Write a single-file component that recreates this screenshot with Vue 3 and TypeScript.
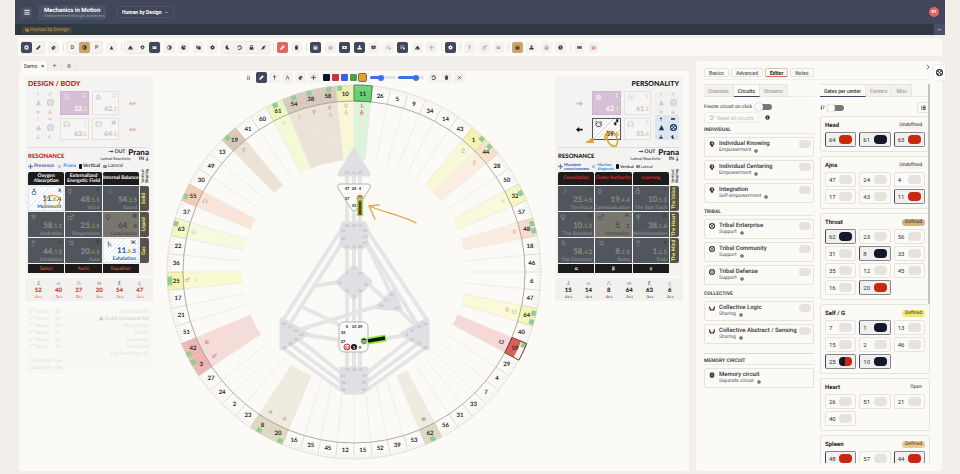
<script setup lang="ts">
import { ref } from 'vue'

/* ---------- icons, drawn on a 16 unit square ---------- */
const icons: Record<string, string> = {
  disc: 'M8 1a7 7 0 1 0 0 14A7 7 0 0 0 8 1Zm0 4a3 3 0 1 1 0 6 3 3 0 0 1 0-6Z',
  pen: 'M1 15l1-5 9-9 4 4-9 9Z',
  eraser: 'M1 9l7-7 6 3v5l-5 5H5Zm6 0l4 3 2-3-4-2Z',
  half: 'M8 1a7 7 0 1 0 0 14A7 7 0 0 0 8 1Zm0 2v10A5 5 0 0 1 8 3Z',
  tri: 'M8 2l6 12H2Z',
  nodes: 'M6 2h4v4h2l3 4v4H1v-4l3-4h2Zm-2 8v2h2v-2Zm6 0v2h2v-2Z',
  shield: 'M8 1l6 3v5l-6 6-6-6V4Zm0 4L5 8l3 3 3-3Z',
  card: 'M2 3h12v10H2Zm2 2v2h8V5Z',
  pie: 'M8 1a7 7 0 1 0 7 7H8Z M10 1v5h5a6 6 0 0 0-5-5Z',
  stack: 'M1 2h9v3h5v9H6v-3H1Zm3 3v3h4V5Z',
  gear: 'M6 1h4v2l3 0 2 5-2 5H10v2H6v-2H3L1 8l2-5h3Zm2 5a2 2 0 1 0 0 4 2 2 0 0 0 0-4Z',
  moon: 'M10 1a7 7 0 1 0 4 11A7 7 0 0 1 10 1Z',
  undo: 'M2 2v5h5L5 5a4.500 4.500 0 1 1-1 6l-2 1a7 7 0 1 0 2-9Z',
  lock: 'M3 7V5a5 5 0 0 1 10 0v2h1v8H2V7Zm2 0h6V5a3 3 0 0 0-6 0Z',
  plug: 'M1 13l4-4-1-3 3-3 2 2 4-4 2 2-4 4 1 3-3 3-2-1-4 4Z',
  trash: 'M2 2h4V1h4v1h4v2H2Zm1 3h10l-1 10H4Z',
  grid: 'M2 2h12v12H2Zm2 2v2h8V4Zm0 4v1h8V8Zm0 3v1h8v-1Z',
  box: 'M1 3h14v10H1Zm5 2v6l5-3Z',
  people: 'M8 1a3 3 0 1 1 0 6 3 3 0 0 1 0-6ZM1 14v-4l4-2h6l4 2v4Z',
  chat: 'M1 2h14v10H9l-3 3v-3H1Zm4 4v2h6V6Z',
  lines: 'M1 2h12v2H1Zm0 4h8v2H1Zm0 4h6v2H1Zm9-2h5v6h-5Z',
  move: 'M8 0l3 4H9v3h3V5l4 3-4 3V9H9v3h2l-3 4-3-4h2V9H4v2L0 8l4-3v2h3V4H5Z',
  pin: 'M5 1h6v2l-1 1v4l2 2H9v5H7v-5H4l2-2V4L5 3Z',
  link: 'M2 4h6v2H4v6h6v-3h2v5H2Zm7-3h6v6l-2-2-5 5-2-2 5-5Z',
  up: 'M8 1l5 5-1.500 1.500L9 5v10H7V5L4.500 7.500 3 6Z',
  letter: 'M7 2h2l5 12h-2L8 5l-4 9H2Z',
  drag: 'M4 2h3v3H4Zm5 0h3v3H9ZM4 7h3v3H4Zm5 0h3v3H9Zm-5 5h3v3H4Zm5 0h3v3H9Z',
  close: 'M3 2l5 5 5-5 1 1-5 5 5 5-1 1-5-5-5 5-1-1 5-5-5-5Z',
  menu: 'M1 2h14v3H1Zm0 5h14v3H1Zm0 5h14v3H1Z',
  goggles: 'M1 4h14v8H10L8 10l-2 2H1Zm3 3v2h2V7Zm6 0v2h2V7Z',
  info: 'M8 1a7 7 0 1 0 0 14A7 7 0 0 0 8 1ZM7 4h2v2H7Zm0 3h2v5H7Z',
  head: 'M4 1h7l3 4v4l-3 2v4H6l-1-3-3-2V4Zm3 3v5h3V4Z',
  wheel: 'M8 0a8 8 0 1 0 0 16A8 8 0 0 0 8 0Zm0 2 3 2-3 3-3-3ZM2 8l2-3 3 3-3 3Zm12 0-2 3-3-3 3-3Zm-6 6-3-2 3-3 3 3Z',
  hands: 'M0 3l3 1 1 5 3 2v4H4L1 11Zm16 0-3 1-1 5-3 2v4h3l3-4Z',
  memory: 'M5 1h6l3 3v8l-3 3H5l-3-3V4Zm2 3v2h2V4Zm0 3v5h2V7Z',
  sort: 'M3 1h2v10h2l-3 4-3-4h2Zm6 1h6v2H9Zm0 4h5v2H9Zm0 4h3v2H9Z',
  list: 'M1 2h3v3H1Zm5 0h9v3H6ZM1 7h3v3H1Zm5 0h9v3H6Zm-5 5h3v3H1Zm5 0h9v3H6Z',
  arrowR: 'M1 6h8V2l7 6-7 6v-4H1Z',
  arrowL: 'M15 6H7V2L0 8l7 6v-4h8Z',
  swap: 'M0 8l5-5v3h6V3l5 5-5 5v-3H5v3Z',
}

type Tool = { icon: string; tone?: string; label: string; text?: string }
type ToolGroup = { joined?: boolean; sep?: boolean; tools: Tool[] }
const t = (icon: string, tone = '', text = ''): Tool => ({ icon, tone, text, label: text || icon })
const groups: ToolGroup[] = [
  { joined: true, tools: [t('disc', 'dark'), t('pen')] },
  { tools: [t('eraser')] },
  { sep: true, joined: true, tools: [t('', '', 'D'), t('half', 'gold'), t('', '', 'P')] },
  { tools: [t('tri')] },
  { sep: true, joined: true, tools: [t('nodes'), t('shield'), t('card', 'dark')] },
  { tools: [t('half'), t('pie'), t('stack'), t('gear')] },
  { joined: true, tools: [t('moon'), t('undo'), t('lock'), t('plug')] },
  { sep: true, tools: [t('pen', 'red'), t('trash')] },
  { sep: true, tools: [t('grid', 'dark'), t('grid', 'faint'), t('box', 'dark'), t('people', 'dark'), t('chat'), t('lines', 'faint'), t('lines', 'dark'), t('nodes'), t('move', 'faint')] },
  { sep: true, tools: [t('gear', 'dark')] },
  { sep: true, tools: [t('pin', 'faint'), t('link', 'faint'), t('card', 'faint')] },
  { sep: true, tools: [t('grid', 'gold'), t('people'), t('lock', 'faint'), t('info')] },
  { sep: true, tools: [t('goggles'), t('grid', 'rose')] },
]
const groupWidth = (g: ToolGroup) => Math.floor(11 + (g.joined ? 12 : 14.6) * (g.tools.length - 1)) + 'px'

const drawTools = [t('drag', 'bare'), t('pen', 'dark'), t('up'), t('letter'), t('eraser'), t('move')]
const swatches = ['#0c1721', '#cf2f49', '#3b61e2', '#48a04a', '#e0a12e']
const activeSwatch = ref(4)
const strokeSize = ref(38)
const opacity = ref(76)

/* ---------- side charts ---------- */
type Cell = { sym: string; mark: string; num: string; line: string; tail: string; name: string; tone: string }
const c = (sym: string, mark: string, n: string, name: string, tone = 'dim'): Cell => {
  const [num, line, tail] = n.split('.')
  return { sym, mark, num, line, tail, name, tone }
}
type Bubble = { sym: string; mark: string; n: string; s: string; tone: string }
interface Chart {
  side: string; title: string; heads: string[]; feet: string[]; strips: string[]
  legend: string[]; rows: Cell[][]; bubbles: Bubble[]; stats: [string, string, string][]
}
const charts: Record<'left' | 'right', Chart> = {
  left: {
    side: 'design', title: 'DESIGN / BODY',
    heads: ['Oxygen Absorption', 'Externalized Energetic Field', 'Internal Balance'],
    feet: ['Satori', 'Auric', 'Equalizer'],
    strips: ['Solid', 'Liquid', 'Gas'],
    legend: ['Presence', 'Prana'],
    rows: [
      [c('♁', 'Ӿ', '11.6.4', 'Movement', 'bright'), c('☿', '▪', '48.5.5', 'Voice'), c('☽', '✦', '54.3.5', 'Sound')],
      [c('♆', '', '58.5.1', 'Hydration'), c('♂', '7', '25.3.5', 'Temperature'), c('♀', '▩', '64.6.4', 'Consistence', 'pale')],
      [c('♇', '▲', '44.5.5', 'Inhalation'), c('♃', '▩', '20.4.5', 'Aura'), c('♄', 'Ж', '11.6.5', 'Exhalation', 'bright')],
    ],
    bubbles: [
      { sym: '☉', mark: '1', n: '32', s: '.5', tone: 'violet' }, { sym: '⊕', mark: 'Չ', n: '42', s: '.2', tone: '' },
      { sym: '☊', mark: 'ʅ', n: '63', s: '.5', tone: '' }, { sym: '☋', mark: '▩', n: '64', s: '.5', tone: '' },
    ],
    stats: [['ჰ', '52', '.4'], ['⩀', '40', '.3'], ['⩃', '37', '.3'], ['ო', '20', '.5'], ['ξ', '54', '.5'], ['ς', '47', '.1']],
  },
  right: {
    side: 'personality', title: 'PERSONALITY',
    heads: ['Foundation', 'Outer Authority', 'Learning'],
    feet: ['α', 'β', 'γ'],
    strips: ['The Voice', 'The Heart', 'The Mind'],
    legend: ['Mundane consciousness', 'Martian diagonals'],
    rows: [
      [c('☽', 'Ξ', '25.4.5', 'The Force'), c('☿', '', '19.4.4', 'Communication'), c('♁', '✦', '10.5.3', 'The Side Track')],
      [c('♀', '▩', '10.5.5', 'The Standard'), c('♂', 'Ж', '5.1.1', 'Motivation', 'pale'), c('♆', '▩', '38.1.6', 'Misinformation')],
      [c('♄', '7', '58.4.2', 'The Conveyor'), c('♃', '', '8.2.5', 'Rules'), c('♇', '▲', '1.2.5', 'Trick')],
    ],
    bubbles: [
      { sym: '⊕', mark: '1', n: '62', s: '.5', tone: 'violet' }, { sym: '☉', mark: 'ʅ', n: '61', s: '.1', tone: '' },
      { sym: '☋', mark: '▞', n: '59', s: '.6', tone: 'hatch' }, { sym: '☊', mark: 'ʃ', n: '55', s: '.6', tone: '' },
    ],
    stats: [['ჰ', '15', '.4'], ['⩀', '14', '.4'], ['⩃', '8', '.4'], ['ო', '64', '.5'], ['ξ', '63', '.5'], ['ς', '6', '.5']],
  },
}
const notes = [
  ['2ⁿᵈ Reso..', 'Or', 'Environment'], ['3ʳᵈ Reso..', 'Or', '▣ (Cold) Advanced 4th'], ['4ᵗʰ Reso..', 'Ox', 'Perspective'],
  ['5ᵗʰ Reso..', 'Fo', 'Power'], ['6ᵗʰ Reso..', 'Oi', 'Generator'], ['7ᵗʰ Reso..', 'To', 'Emotional'],
  ['', '', 'Trip. Definition 1x'], ['Connection', 'Lux', ''], ['Outbreath', 'Oxi', ''],
]

/* ---------- wheel ---------- */
const CX = 354, CY = 272, STEP = 360 / 64
const order = [11, 26, 5, 9, 34, 14, 43, 1, 44, 28, 50, 32, 57, 48, 18, 46, 6, 47, 64, 40, 59, 29, 4, 7, 33, 31, 56, 62, 53, 39, 52, 15,
  12, 45, 35, 16, 20, 8, 23, 2, 24, 27, 3, 42, 51, 21, 17, 25, 36, 22, 63, 37, 55, 30, 49, 13, 19, 41, 60, 61, 54, 38, 58, 10]
const at = (deg: number, r: number) => {
  const a = (deg * Math.PI) / 180
  return { x: +(CX + r * Math.sin(a)).toFixed(2), y: +(CY - r * Math.cos(a)).toFixed(2) }
}
const wedge = (a: number, b: number, r0: number, r1: number) => {
  const p = at(a, r1), q = at(b, r1), s = at(b, r0), u = at(a, r0)
  return `M${p.x} ${p.y}A${r1} ${r1} 0 0 1 ${q.x} ${q.y}L${s.x} ${s.y}A${r0} ${r0} 0 0 0 ${u.x} ${u.y}Z`
}
const tints: Record<number, string[]> = {
  11: ['#67cf72', '#dff3dc'], 10: ['#f0f0b4', '#f8f8d8'], 58: ['#d9c9ba', '#ece3d8'], 38: ['#d9c9ba', '#ece3d8'], 54: ['#d9c9ba', '#ece3d8'],
  61: ['#edf8bd', '#f5fad6'], 19: ['#d8c8b6', '#ebe3d8'], 55: ['#f3cdb2', '#f9e5d9'], 63: ['#f3f8c4', '#f8fae0'], 25: ['#f4f6ae', '#f9f9d2'],
  42: ['#eeb4b0', '#f6dcd8'], 3: ['#eeb4b0', '#f6dcd8'], 20: ['#dedac2', '#efebde'], 8: ['#dedac2', '#efebde'], 62: ['#dedac2', '#efebde'],
  59: ['#dd5f58', '#f6d9d6'], 64: ['#f5f7b4', '#fafad8'], 48: ['#f8dccb', '#fbece2'], 32: ['#f4f8c0', '#f9fadb'],
  1: ['#f4f4ae', '#f8f8d8'], 44: ['#f5e2c8', '#fbeee0'],
}
const greens: Record<number, number[]> = { 10: [0.2], 58: [0.6], 38: [0.5], 54: [0.6], 61: [0.5], 19: [0.3], 55: [0.3], 63: [0.7], 25: [0.4, 0.6], 42: [0.3], 3: [0.8], 20: [0.2], 8: [0.5], 62: [0.5], 59: [0.15], 64: [0.3, 0.8], 48: [0.3, 0.7], 32: [0.5], 1: [0.8], 44: [0.4], 11: [] }
const gates = order.map((n, i) => {
  const a = i * STEP, b = a + STEP
  return {
    n, label: at(a + STEP / 2, 178), tint: tints[n],
    outer: wedge(a, b, 171, n === 59 ? 181 : 187), inner: wedge(a, b, 112, 171),
    p0: at(a, 112), p1: at(a, 171), p2: at(a, 187),
    ticks: [1, 2, 3, 4, 5].map(k => ({ p: at(a + (k * STEP) / 6, 182), q: at(a + (k * STEP) / 6, 187) })),
    greens: (greens[n] || []).map(f => wedge(a + STEP * f - 0.8, a + STEP * f + 0.8, 182, 187)),
  }
})
const sq59 = wedge(20 * STEP, 21 * STEP, 171, 187)
const sq11 = wedge(0, STEP, 171, 187)
const planets = [
  { g: 11, s: '♄', r: 166, k: '#d8402c' }, { g: 11, s: '♁', r: 159, k: '#d8402c' }, { g: 10, s: '♀', r: 166, k: '#b9b7a4' }, { g: 10, s: '♁', r: 159, k: '#b9b7a4' },
  { g: 58, s: '♆', r: 166, k: '#df8a7e' }, { g: 58, s: '♄', r: 159, k: '#a7a09a' }, { g: 38, s: '♆', r: 165, k: '#a7a09a' }, { g: 54, s: '☽', r: 165, k: '#e08478' },
  { g: 61, s: '☉', r: 165, k: '#aeb39a' }, { g: 19, s: '☿', r: 164, k: '#aaa29a' }, { g: 55, s: '☊', r: 165, k: '#c99c90' }, { g: 63, s: '☊', r: 165, k: '#c9c29c' },
  { g: 25, s: '♂', r: 167, k: '#d59a86' }, { g: 25, s: '☽', r: 159, k: '#b9b58e' }, { g: 42, s: '⊕', r: 163, k: '#d87a72' }, { g: 3, s: '♂', r: 163, k: '#a88482' },
  { g: 20, s: '♃', r: 163, k: '#e08a7c' }, { g: 8, s: '♃', r: 163, k: '#9c9a8e' }, { g: 62, s: '⊕', r: 163, k: '#8f8d80' }, { g: 59, s: '☋', r: 163, k: '#14181c' },
  { g: 64, s: '☋', r: 165, k: '#c4c094' }, { g: 64, s: '♀', r: 158, k: '#e0a090' }, { g: 48, s: '☿', r: 165, k: '#df9080' }, { g: 32, s: '☉', r: 165, k: '#c9a294' },
  { g: 1, s: '♇', r: 163, k: '#a8a684' }, { g: 44, s: '♇', r: 163, k: '#e0937f' },
].map(p => ({ ...p, ...at((order.indexOf(p.g) + 0.5) * STEP, p.r) }))

const channels = [
  'M347 170V390', 'M354 170V390', 'M360 170V390',
  'M341 230L283 320', 'M345 238L291 322', 'M367 230L427 320', 'M364 238L417 324', 'M366 242L390 292',
  'M339 282L314 286', 'M302 307L342 326', 'M368 284L384 298', 'M381 305L298 330', 'M397 308L414 324',
  'M300 334L340 340', 'M368 341L408 335',
  'M283 348L341 390', 'M289 343L341 382', 'M297 338L342 374', 'M425 348L367 390', 'M419 343L367 382', 'M411 338L366 374',
]
type GateText = [string, number, number]
const mutedGates: GateText[] = [
  ['64', 347, 174], ['61', 354, 174], ['63', 360, 174], ['62', 347, 227], ['23', 354, 227], ['56', 360, 227],
  ['16', 343, 232], ['20', 343, 240], ['35', 365, 232], ['12', 365, 238], ['45', 365, 244], ['31', 347, 248], ['8', 354, 248], ['33', 360, 248],
  ['1', 354, 270], ['7', 347, 275], ['13', 360, 275], ['10', 339, 284], ['25', 366, 286], ['15', 347, 292], ['46', 360, 292], ['2', 354, 298],
  ['21', 392, 296], ['51', 386, 301], ['26', 381, 307], ['40', 397, 309],
  ['48', 284, 325], ['57', 290, 328], ['44', 296, 332], ['50', 301, 336], ['32', 296, 341], ['28', 290, 345], ['18', 284, 349],
  ['36', 425, 325], ['22', 419, 328], ['37', 412, 332], ['6', 407, 336], ['49', 412, 341], ['55', 419, 345], ['30', 425, 349],
  ['53', 347, 371], ['60', 354, 371], ['52', 360, 371], ['54', 343, 377], ['38', 343, 384], ['58', 343, 391], ['19', 364, 377], ['39', 364, 384], ['41', 364, 391],
]
const openGates: GateText[] = [
  ['47', 347, 190], ['24', 354, 190], ['4', 360, 190], ['17', 347, 200], ['43', 354, 207],
  ['5', 347, 328], ['14', 354, 328], ['29', 360, 328], ['34', 343, 334], ['27', 343, 343], ['9', 360, 349],
]

/* ---------- editor ---------- */
const pages = ['Basics', 'Advanced', 'Editor', 'Notes']
const page = ref('Editor')
const circuitTabs = ['Channels', 'Circuits', 'Streams']
const circuitTab = ref('Circuits')
const gateTabs = ['Gates per center', 'Centers', 'Misc']
const gateTab = ref('Gates per center')
const sections = [
  { title: 'Individual', icon: 'head', sub: true, items: [['Individual Knowing', 'Empowerment'], ['Individual Centering', 'Empowerment'], ['Integration', 'Self-empowerment']] },
  { title: 'Tribal', icon: 'wheel', sub: true, items: [['Tribal Enterprise', 'Support'], ['Tribal Community', 'Support'], ['Tribal Defense', 'Support']] },
  { title: 'Collective', icon: 'hands', sub: true, items: [['Collective Logic', 'Sharing'], ['Collective Abstract / Sensing', 'Sharing']] },
  { title: 'Memory circuit', icon: 'memory', sub: false, items: [['Memory circuit', 'Separate circuit']] },
]
const centers = [
  { name: 'Head', state: 'Undefined', tone: 'soft', gates: [[64, 'r'], [61, 'k'], [63, 'r']] },
  { name: 'Ajna', state: 'Undefined', tone: 'soft', gates: [[47, ''], [24, ''], [4, ''], [17, ''], [43, ''], [11, 'r']] },
  { name: 'Throat', state: 'Defined', tone: 'tan', gates: [[62, 'k'], [23, ''], [56, ''], [31, ''], [8, 'k'], [33, ''], [35, ''], [12, ''], [45, ''], [16, ''], [20, 'r']] },
  { name: 'Self / G', state: 'Defined', tone: 'lemon', gates: [[7, ''], [1, 'k'], [13, ''], [15, ''], [2, ''], [46, ''], [25, 'kr'], [10, 'k']] },
  { name: 'Heart', state: 'Open', tone: '', gates: [[26, ''], [51, ''], [21, ''], [40, '']] },
  { name: 'Spleen', state: 'Defined', tone: 'peach', gates: [[48, 'r'], [57, ''], [44, 'r']] },
]
</script>

<template>
  <div class="app">
    <header class="top">
      <div class="bar">
        <button class="burger" aria-label="Menu"><svg viewBox="0 0 16 16"><path :d="icons.menu" /></svg></button>
        <div class="brand">
          <strong>Mechanics in Motion</strong>
          <span>Empowerment through awareness</span>
        </div>
        <div class="picker">
          <select aria-label="System"><option>Human by Design</option></select>
          <svg viewBox="0 0 16 16"><path d="M3 5l5 5 5-5" /></svg>
        </div>
        <button class="avatar">RT</button>
      </div>
      <div class="crumbs">
        <a href="#" class="crumb"><svg viewBox="0 0 16 16"><path :d="icons.stack" /></svg>Human by Design</a>
        <button class="fold" aria-label="Collapse"><svg viewBox="0 0 16 16"><path d="M3 11l5-5 5 5" /></svg></button>
      </div>
    </header>

    <nav class="tools">
      <template v-for="(g, i) in groups" :key="i">
        <i v-if="g.sep" class="sep"></i>
        <div class="group" :class="{ joined: g.joined }" :style="{ width: groupWidth(g) }">
          <button v-for="(b, k) in g.tools" :key="k" class="tool" :class="b.tone" :aria-label="b.label">
            <template v-if="b.text">{{ b.text }}</template>
            <svg v-else viewBox="0 0 16 16"><path fill-rule="evenodd" :d="icons[b.icon]" /></svg>
          </button>
        </div>
      </template>
    </nav>

    <main class="work">
      <section class="left">
        <div class="doc-tabs">
          <button class="doc on">Demo <b>×</b></button>
          <button class="doc plus">+</button>
          <button class="doc" aria-label="Layout"><svg viewBox="0 0 16 16"><path fill-rule="evenodd" :d="icons.grid" /></svg></button>
        </div>
        <div class="stage">
          <aside v-for="(ch, key) in charts" :key="key" class="chart" :class="ch.side">
            <div class="sheet">
              <h2>{{ ch.title }}</h2>
              <div class="hero">
                <div class="glyphs">
                  <svg v-for="(ic, k) in ['pin', 'pen', 'tri', 'wheel', 'gear', 'lock', 'up', 'goggles', 'tri', 'wheel', 'people', 'moon']" :key="k" viewBox="0 0 16 16" :class="{ big: k % 6 === 2 || k % 6 === 3, warm: k === 4 || k === 5 || k === 7 }">
                    <path fill-rule="evenodd" :d="icons[ic]" />
                  </svg>
                </div>
                <div class="bubbles">
                  <div v-for="(b, k) in ch.bubbles" :key="k" class="bubble" :class="b.tone">
                    <span class="sym">{{ b.sym }}</span><span class="mark">{{ b.mark }}</span>
                    <span class="val">{{ b.n }}<em>{{ b.s }}</em></span>
                  </div>
                </div>
                <div class="arrows">
                  <svg v-for="k in 2" :key="k" viewBox="0 0 16 16" :class="{ strong: key === 'right' && k === 2 }">
                    <path :d="key === 'left' ? icons.swap : k === 1 ? icons.arrowR : icons.arrowL" />
                  </svg>
                </div>
                <svg v-if="key === 'right'" class="scribble" viewBox="0 0 36 22">
                  <path d="M0 15c5 1 9-3 6-3-5 2-4 4 2 3M22 6c-3 7 2 14 8 13 3-4 1-12-4-14-7 0-9 5-5 8" />
                </svg>
              </div>
              <div class="res">
                <h3>RESONANCE</h3>
                <div class="prana">
                  <p><span>→ OUT</span> <b>Prana</b></p>
                  <p class="small"><i>Lateral Reactivity</i><span>IN ↓</span></p>
                </div>
              </div>
              <div class="legend">
                <span v-for="(l, k) in ch.legend" :key="l" class="blue" :class="{ light: k === 1 }">
                  <svg viewBox="0 0 16 16"><path :d="k ? icons.close : icons.move" /></svg><u>{{ l }}</u>
                </span>
                <span><s class="tall"></s><b>Vertical</b></span>
                <span><s></s>Lateral</span>
              </div>
              <table>
                <thead>
                  <tr>
                    <th v-for="h in ch.heads" :key="h"><div>{{ h }}</div></th>
                    <th class="vhead"><span>Vertical<br />Shaping</span></th>
                  </tr>
                </thead>
                <tbody>
                  <tr v-for="(row, r) in ch.rows" :key="r">
                    <td v-for="(x, k) in row" :key="k" :class="x.tone">
                      <div class="cell">
                        <span class="sym">{{ x.sym }}</span><span class="mark">{{ x.mark }}</span>
                        <span class="val">{{ x.num }}<small>.<em>{{ x.line }}</em>.{{ x.tail }}</small></span>
                        <span class="name">{{ x.name }}</span>
                        <svg v-if="key === 'left' && r === 0 && k === 0" class="ring" viewBox="0 0 20 16"><path d="M5 2c8-3 15 2 12 9-5 5-14 5-16-1C1 5 4 2 11 1" /></svg>
                      </div>
                    </td>
                    <th class="strip"><span>{{ ch.strips[r] }}</span></th>
                  </tr>
                </tbody>
                <tfoot>
                  <tr><th v-for="f in ch.feet" :key="f">{{ f }}</th></tr>
                </tfoot>
              </table>
            </div>
            <div class="stats">
              <div v-for="(s, k) in ch.stats" :key="k"><i>{{ s[0] }}</i><b>{{ s[1] }}</b><span>{{ s[2] }}<small>6.1</small></span></div>
            </div>
            <div v-if="key === 'left'" class="faded">
              <p v-for="(n, k) in notes" :key="k"><span>{{ n[0] }}</span><span>{{ n[1] }}</span><span :class="{ seen: k === 1 }">{{ n[2] }}</span></p>
            </div>
          </aside>

          <div class="middle">
            <div class="draw">
              <button v-for="b in drawTools" :key="b.icon" class="tool" :class="b.tone" :aria-label="b.label">
                <svg viewBox="0 0 16 16"><path fill-rule="evenodd" :d="icons[b.icon]" /></svg>
              </button>
              <div class="swatches">
                <button v-for="(s, k) in swatches" :key="s" :class="{ on: k === activeSwatch }" :style="{ background: s }" :aria-label="s" @click="activeSwatch = k"></button>
              </div>
              <div class="sliders">
                <input v-model="strokeSize" type="range" aria-label="Stroke size" :style="{ '--v': strokeSize + '%' }" />
                <input v-model="opacity" type="range" aria-label="Opacity" :style="{ '--v': opacity + '%' }" />
              </div>
              <button v-for="b in ['undo', 'trash', 'close']" :key="b" class="tool" :aria-label="b">
                <svg viewBox="0 0 16 16"><path :d="icons[b]" /></svg>
              </button>
            </div>
            <svg class="wheel" viewBox="153 84 402 387">
              <g v-for="g in gates" :key="g.n">
                <path v-if="g.tint" :d="g.inner" :fill="g.tint[1]" />
                <path v-if="g.tint" :d="g.outer" :fill="g.tint[0]" />
              </g>
              <g v-for="g in gates" :key="'l' + g.n">
                <line class="ray" :x1="g.p0.x" :y1="g.p0.y" :x2="g.p1.x" :y2="g.p1.y" />
                <line class="cut" :x1="g.p1.x" :y1="g.p1.y" :x2="g.p2.x" :y2="g.p2.y" />
                <line v-for="(k, j) in g.ticks" :key="j" class="tick" :x1="k.p.x" :y1="k.p.y" :x2="k.q.x" :y2="k.q.y" />
                <path v-for="(d, j) in g.greens" :key="'g' + j" :d="d" class="leaf" />
              </g>
              <circle cx="354" cy="272" r="187" class="rim" />
              <circle cx="354" cy="272" r="171" class="orbit" />
              <path :d="sq11" fill="none" stroke="#3f8f49" />
              <path :d="sq59" fill="none" stroke="#6b3a34" />
              <text v-for="g in gates" :key="'t' + g.n" class="gate" :x="g.label.x" :y="g.label.y + 2">{{ g.n }}</text>
              <text v-for="(p, k) in planets" :key="'p' + k" class="planet" :x="p.x" :y="p.y + 2" :fill="p.k">{{ p.s }}</text>

              <g class="body">
                <path v-for="d in channels" :key="d" :d="d" class="chan" />
                <path d="M354 151L368 174H340Z" class="mass" />
                <path d="M344 224H364L366 228V244L362 247H346L342 244V228Z" class="mass" />
                <path d="M354 267L370 282L354 297L338 282Z" class="mass" />
                <path d="M393 292L400 309L378 307Z" class="mass" />
                <path d="M282 320L306 334L282 348Z" class="mass" />
                <path d="M427 320L403 334L427 348Z" class="mass" />
                <path d="M342 369H366V389L362 392H346L342 389Z" class="mass" />
              </g>
              <text v-for="(g, k) in mutedGates" :key="'m' + k" class="muted" :x="g[1]" :y="g[2]">{{ g[0] }}</text>
              <path d="M339 184H369Q371 185 370 188L356 210Q354 212 352 210L338 188Q337 185 339 184Z" class="open" />
              <rect x="339" y="322" width="29" height="30" rx="5" class="open" />
              <path d="M360 197V216" stroke="#8ee84a" stroke-width="6" />
              <path d="M360 200V215" stroke="#7c3222" stroke-width="3" />
              <path d="M368 341L386 338" stroke="#8af03c" stroke-width="7" />
              <path d="M368 341L385 338" stroke="#11150e" stroke-width="3.500" />
              <circle cx="360" cy="198" r="3" fill="#c6523c" stroke="#7bd63c" />
              <circle cx="364" cy="341" r="3" fill="#1d3012" stroke="#7bd63c" />
              <circle cx="347" cy="347" r="3" fill="#fff" stroke="#c9352a" />
              <circle cx="354" cy="347" r="3" fill="#111" />
              <text v-for="(g, k) in openGates" :key="'o' + k" class="live" :x="g[1]" :y="g[2]">{{ g[0] }}</text>
              <text class="live inv" x="360" y="200">11</text>
              <text class="live inv" x="364" y="343">59</text>
              <text class="live hot" x="347" y="349">42</text>
              <text class="live inv" x="354" y="349">3</text>
              <path d="M416 223C404 216 386 213 369 206M379 205L369 206L375 219" class="sketch" />
            </svg>
          </div>
        </div>
      </section>

      <section class="editor">
        <div class="pages">
          <button v-for="p in pages" :key="p" :class="{ on: p === page }" @click="page = p">{{ p }}</button>
          <button class="more" aria-label="Collapse panel"><svg viewBox="0 0 16 16"><path d="M5 2l6 6-6 6" /></svg></button>
        </div>
        <button class="dock" aria-label="Chart"><svg viewBox="0 0 16 16"><path fill-rule="evenodd" :d="icons.wheel" /></svg></button>
        <div class="cols">
          <div class="col circuits">
            <div class="tabs">
              <button v-for="x in circuitTabs" :key="x" :class="{ on: x === circuitTab }" @click="circuitTab = x">{{ x }}</button>
            </div>
            <label class="freeze">Freeze circuit on click <input type="checkbox" class="switch" /></label>
            <div class="reset">
              <button disabled><svg viewBox="0 0 16 16"><path :d="icons.undo" /></svg>Reset all circuits</button>
              <svg viewBox="0 0 16 16" class="info"><path fill-rule="evenodd" :d="icons.info" /></svg>
            </div>
            <section v-for="s in sections" :key="s.title" :class="{ apart: !s.sub }">
              <h4>{{ s.title }}</h4>
              <label v-for="it in s.items" :key="it[0]" class="circuit">
                <svg viewBox="0 0 16 16" class="lead"><path fill-rule="evenodd" :d="icons[s.icon]" /></svg>
                <span class="copy"><b>{{ it[0] }}</b><span>{{ it[1] }} <svg viewBox="0 0 16 16"><path fill-rule="evenodd" :d="icons.info" /></svg></span></span>
                <input v-if="s.sub" type="checkbox" class="pill" />
              </label>
            </section>
          </div>
          <div class="col gates">
            <div class="tabs">
              <button v-for="x in gateTabs" :key="x" :class="{ on: x === gateTab }" @click="gateTab = x">{{ x }}</button>
            </div>
            <div class="sortrow">
              <label><svg viewBox="0 0 16 16"><path :d="icons.sort" /></svg><input type="checkbox" class="switch" aria-label="Sort gates" /></label>
              <button aria-label="List view"><svg viewBox="0 0 16 16"><path :d="icons.list" /></svg></button>
            </div>
            <div v-for="x in centers" :key="x.name" class="center">
              <header><b>{{ x.name }}</b><span :class="x.tone">{{ x.state }}</span></header>
              <div class="chips">
                <button v-for="g in x.gates" :key="g[0]" :class="{ on: g[1] }">{{ g[0] }}<i :class="g[1]"></i></button>
              </div>
            </div>
          </div>
          <div class="rail"><i></i></div>
        </div>
      </section>
    </main>
  </div>
</template>

<style>
body { background: #f2efeb; }
</style>

<style scoped>
* { box-sizing: border-box; }
.app { display: flex; flex-direction: column; height: 100vh; padding: 0 15px; font: 6px/8px Roboto, "Liberation Sans", sans-serif; text-rendering: geometricPrecision; color: #2c3038; overflow: hidden; }
button, select, input { font: inherit; color: inherit; margin: 0; padding: 0; border: 0; background: none; }
button { display: flex; align-items: center; justify-content: center; }
h2, h3, h4, p { margin: 0; }
svg { display: block; fill: currentColor; }

.top { color: #fff; flex: none; }
.bar { display: flex; align-items: center; height: 24px; background: #41465a; padding: 0 6px; }
.burger { width: 11px; height: 11px; border-radius: 2px; background: #4b5063; margin-right: 6px; color: #d3d6dd; }
.burger svg { width: 6px; height: 6px; }
.brand { display: flex; flex-direction: column; width: 68px; height: 15px; border-radius: 3px; background: #4b5164; padding: 2px 6px; white-space: nowrap; margin-right: 11px; }
.brand strong { font-size: 6px; line-height: 7px; }
.brand span { font-size: 4px; line-height: 4px; color: #8fa5ae; }
.picker { display: flex; align-items: center; height: 12px; border: 1px solid #4f5468; border-radius: 2px; padding: 0 4px; }
.picker select { appearance: none; font-size: 5px; font-weight: 700; width: 42px; }
.picker svg { width: 5px; height: 5px; fill: none; stroke: #ccd; stroke-width: 2; }
.avatar { width: 10px; height: 10px; border-radius: 50%; background: #e0665e; font-size: 4px; font-weight: 700; margin-left: auto; }
.crumbs { display: flex; align-items: center; height: 11px; background: #2f3941; padding-left: 7px; }
.crumb { display: flex; align-items: center; gap: 1px; height: 6px; padding: 0 3px; background: #454640; color: #c79a4c; font-size: 5px; line-height: 6px; text-decoration: none; border-radius: 1px; }
.crumb svg { width: 4px; height: 4px; }
.fold { width: 11px; height: 11px; margin-left: auto; background: #4b4f68; }
.fold svg { width: 5px; height: 5px; fill: none; stroke: #fff; stroke-width: 2; }

.tools { display: flex; align-items: center; gap: 4px; flex: none; height: 18px; margin: 3px 3px 5px; padding-left: 3px; background: #fbfaf6; }
.sep { width: 0; height: 8px; border-left: 1px solid #e6e3de; margin-right: -1px; }
.group { display: flex; justify-content: space-between; }
.joined { background: #f4f2ee; border-radius: 2px; box-shadow: 0 0 0 1px #edebe6; }
.tool { width: 11px; height: 11px; border-radius: 2px; background: #f4f2ee; color: #3b3d42; font-size: 5px; font-weight: 500; flex: none; }
.tool svg { width: 5px; height: 5px; }
.tool.dark { background: #41465a; color: #fff; }
.tool.gold { background: #cba766; color: #2a2a2a; }
.tool.red { background: #df6a5c; color: #fff; }
.tool.faint { color: #a9a8a6; }
.tool.rose { color: #e77d80; }
.tool.bare { background: none; }

.work { display: grid; grid-template-columns: minmax(0, 1fr) 246px; gap: 7px; flex: 1; min-height: 0; padding: 0 3px 3px 4px; }
.left { display: flex; flex-direction: column; min-height: 0; }
.doc-tabs { display: flex; height: 10px; padding-left: 2px; flex: none; }
.doc { width: 14px; color: #6d6c6a; border-right: 1px solid #e8e5df; }
.doc.on { width: 27px; gap: 4px; background: #fbfaf6; color: #2c3038; font-size: 5px; border-radius: 2px 2px 0 0; }
.doc.plus { font-size: 8px; }
.doc svg { width: 4px; height: 4px; }
.stage { display: grid; grid-template-columns: 128px minmax(0, 1fr) 128px; align-items: start; flex: 1; min-height: 0; padding: 0 6px; background: #fbfaf6; border-radius: 0 0 3px 3px; }
.middle { grid-column: 2; grid-row: 1; }
.chart { padding-top: 5px; font-family: Lato, "Open Sans", sans-serif; min-width: 0; grid-row: 1; }
.design { grid-column: 1; }
.personality { grid-column: 3; }

.sheet { background: #f4f3f1; padding: 4px 4px 3px 3px; }
h2 { font-size: 7px; line-height: 8px; font-weight: 900; color: #14161a; text-align: right; height: 11px; white-space: nowrap; }
.design h2 { color: #b92613; text-align: left; }
.hero { position: relative; display: flex; gap: 4px; height: 57px; padding: 0 4px; border-bottom: 1px solid #dddcda; }
.personality .hero { flex-direction: row-reverse; padding: 0; }
.glyphs { display: grid; grid-template-columns: 12px 12px; grid-template-rows: 6px 9px 7px 6px 9px 7px; place-items: center; height: 49px; color: #c6c8ce; row-gap: 1px; }
.glyphs svg { width: 4px; height: 4px; opacity: 0.800; }
.glyphs svg.big { width: 7px; height: 7px; color: #bcc3ce; }
.glyphs svg.warm { color: #e2bfb5; }
.personality .glyphs svg:nth-child(n + 7) { color: #173052; opacity: 1; }
.personality .glyphs { background: linear-gradient(#f1f1f0 50%, #dde6ee 50%); }
.bubbles { display: grid; grid-template-columns: 29px 27px; grid-template-rows: 24px 22px; gap: 3px; height: 49px; }
.bubble { position: relative; border: 1px solid #e3e2df; color: #c5c4c6; background: #f6f5f3; }
.bubble.violet { background: #d7bfd6; border-color: #cdb5cd; color: #fbf8fb; }
.bubble.hatch { background: repeating-linear-gradient(135deg, #fff 0 2px, #e2e2e2 2px 3px); border-color: #555; color: #111; }
.bubble .val { position: absolute; right: 1px; bottom: 0; font-size: 7px; line-height: 8px; font-weight: 900; }
.bubble em { font-style: normal; font-size: 6px; color: #dfd39a; }
.bubble.violet em { color: #eee0b0; }
.bubble.hatch em { color: #d7a52e; }
.sym { position: absolute; left: 2px; top: 2px; font: 8px/8px "DejaVu Sans", sans-serif; }
.mark { position: absolute; right: 2px; top: 1px; font: 5px/6px "DejaVu Sans", sans-serif; }
.arrows { display: grid; grid-template-rows: 24px 22px; gap: 3px; place-items: center; width: 18px; color: #dcbcb8; }
.arrows svg { width: 7px; height: 7px; }
.personality .arrows { color: #c0c0c0; }
.personality .arrows svg.strong { color: #111; }
.scribble { position: absolute; left: 28px; top: 36px; width: 36px; height: 22px; fill: none; stroke: #dda02f; stroke-width: 1.500; overflow: visible; }

.res { display: flex; justify-content: space-between; height: 14px; padding-top: 1px; }
h3 { font-size: 6px; line-height: 16px; font-weight: 900; color: #14161a; }
.design h3 { color: #b92613; }
.prana { text-align: right; white-space: nowrap; }
.prana p { display: flex; justify-content: flex-end; align-items: center; gap: 3px; font-size: 5px; line-height: 7px; font-weight: 700; }
.prana b { font-size: 8px; font-weight: 900; color: #14161a; }
.prana .small { font-size: 5px; line-height: 6px; gap: 8px; }
.prana .small i { font-style: normal; font-weight: 400; font-size: 4px; }
.legend { display: flex; align-items: center; gap: 3px; height: 9px; font-size: 5px; line-height: 5px; white-space: nowrap; margin-bottom: 1px; padding-right: 12px; }
.legend span { display: flex; align-items: center; gap: 1px; }
.legend u { text-decoration: none; }
.legend .blue { color: #1d57b4; font-weight: 700; }
.legend .light { color: #3e86e0; }
.legend svg { width: 5px; height: 5px; flex: none; }
.legend s { width: 4px; height: 3px; background: #888; border-radius: 1px; }
.legend s.tall { width: 3px; height: 5px; background: #111; }
.personality .legend { gap: 2px; font-size: 4px; line-height: 4px; }
.personality .legend u { white-space: normal; width: min-content; }

table { width: 100%; table-layout: fixed; border-collapse: separate; border-spacing: 0; }
th, td { padding: 0 1px 1px 0; position: relative; }
thead th:last-child, .strip { width: 9px; padding-right: 0; }
thead div { display: flex; align-items: center; justify-content: center; height: 13px; background: #1d1c1c; color: #fff; font-size: 5px; line-height: 5px; font-weight: 700; border-radius: 2px 2px 0 0; }
.personality thead div { color: #d6362a; white-space: nowrap; }
.vhead span { position: absolute; right: 0; bottom: 3px; writing-mode: vertical-rl; rotate: 180deg; font-size: 4px; line-height: 4px; text-align: left; }
.cell { position: relative; height: 25px; background: #50565b; color: #858a8f; }
.pale .cell { background: #78766f; color: #4f4e49; }
.bright .cell { background: repeating-linear-gradient(135deg, #fff 0 2px, #e6eef3 2px 3px); color: #2a5fa5; border: 1px solid #dfe8ee; }
.cell .mark { color: #3a4a40; }
.bright .mark { color: #111; }
.cell .val { position: absolute; right: 2px; bottom: 6px; font-size: 8px; line-height: 8px; font-weight: 900; }
.cell small { font-size: 6px; }
.cell em { font-style: normal; color: #7c8a4e; }
.bright em { color: #d9a320; }
.cell .name { position: absolute; right: 2px; bottom: 0; font-size: 5px; line-height: 6px; font-weight: 700; white-space: nowrap; }
.ring { position: absolute; right: 1px; top: 7px; width: 18px; height: 15px; fill: none; stroke: #e2a43a; stroke-width: 1.200; }
.strip span { display: flex; align-items: center; justify-content: center; width: 9px; height: 25px; writing-mode: vertical-rl; rotate: 180deg; background: #57534a; color: #e8e07c; font-size: 5px; line-height: 9px; font-weight: 900; border-radius: 2px 0 0 2px; white-space: nowrap; }
tfoot th { height: 9px; font-size: 5px; line-height: 8px; font-weight: 700; color: #d6483a; background: #1d1c1c; border-right: 1px solid #f4f3f1; padding: 0; }
.personality tfoot th { color: #fff; }
.stats { display: grid; grid-template-columns: repeat(6, 1fr); margin-top: 2px; height: 23px; padding: 3px 3px 0; background: #f2f1ef; text-align: center; color: #14161a; }
.design .stats { color: #c0392b; }
.stats div { display: flex; flex-direction: column; }
.stats i { font: 5px/6px "DejaVu Sans", sans-serif; color: #555; }
.stats b { font-size: 6px; line-height: 7px; font-weight: 900; }
.stats span { font-size: 4px; line-height: 5px; }
.stats small { font-size: 3px; }
.faded { margin-top: 6px; height: 67px; padding: 2px 4px; background: #f9f8f5; color: #e3e2df; font-size: 5px; line-height: 7px; }
.faded p { display: grid; grid-template-columns: 26px 20px 1fr; height: 7px; }
.faded span:last-child { text-align: right; }
.faded .seen { color: #c8c8c8; }

.draw { display: flex; align-items: center; justify-content: center; gap: 2px; height: 13px; }
.swatches { display: flex; gap: 2px; margin: 0 2px; }
.swatches button { width: 7px; height: 7px; border-radius: 1px; }
.swatches .on { outline: 1px solid #7b6a45; }
.sliders { display: flex; gap: 2px; margin-right: 2px; }
.sliders input { appearance: none; width: 26px; height: 3px; border-radius: 2px; border: 0; background: linear-gradient(90deg, #3a72ea var(--v), #e2e2e4 var(--v)); }
.sliders input::-webkit-slider-thumb { appearance: none; width: 6px; height: 6px; border-radius: 50%; background: #3a72ea; }
.wheel { width: 100%; height: auto; fill: none; }
.wheel text { text-anchor: middle; }
.ray { stroke: #e8e6e2; stroke-width: 0.700; }
.cut { stroke: #cfcdca; stroke-width: 0.700; }
.tick { stroke: #dedcd9; stroke-width: 0.500; }
.leaf { fill: #93cc92; }
.rim { stroke: #d5d3cf; stroke-width: 0.600; }
.orbit { stroke: #8c8a86; stroke-width: 0.700; }
.gate { font: 700 6px Lato, sans-serif; fill: #23262b; }
.planet { font: 6px "DejaVu Sans", sans-serif; }
.chan { stroke: #e5e5e8; stroke-width: 4; }
.mass { fill: #dfe0e4; stroke: #dfe0e4; stroke-width: 5; stroke-linejoin: round; }
.muted { font: 4px Lato, sans-serif; fill: #acadb2; }
.open { fill: #fafaf8; stroke: #a3a3a0; stroke-width: 0.800; }
.live { font: 900 4px Lato, sans-serif; fill: #15181c; }
.live.inv { fill: #fff; }
.live.hot { fill: #c9352a; }
.sketch { stroke: #e5a345; stroke-width: 1.300; stroke-linecap: round; }

.editor { position: relative; display: flex; flex-direction: column; min-height: 0; padding: 0 12px 8px 8px; background: #fbfaf6; border-radius: 3px; }
.pages { display: flex; gap: 2px; height: 19px; padding-top: 7px; border-bottom: 1px solid #efede9; margin-bottom: 4px; flex: none; }
.pages button { height: 9px; padding: 0 4px; border: 1px solid #e6e3dd; border-radius: 2px; color: #55585e; font-weight: 500; font-size: 5px; }
.pages .on { border-color: #d8c8b0; border-bottom-color: #d9685a; color: #15181c; font-weight: 700; }
.pages .more { border: 0; padding: 0; margin: -6px -1px 0 auto; }
.more svg { width: 6px; height: 6px; fill: none; stroke: #333; stroke-width: 2; }
.dock { position: absolute; right: -3px; top: 4px; width: 11px; height: 15px; background: #fff; border-radius: 2px; box-shadow: 0 0 2px #dcd9d4; }
.dock svg { width: 7px; height: 7px; color: #23262b; }
.cols { position: relative; display: grid; grid-template-columns: 110px 110px; gap: 6px; flex: 1; min-height: 0; overflow: hidden; }
.tabs { display: flex; height: 13px; border-bottom: 1px solid #eceae5; margin-bottom: 5px; }
.tabs button { height: 13px; padding: 0 4px; background: #f3f1ec; border: 1px solid #e8e5df; border-left-width: 0; color: #a3a09b; font-weight: 500; font-size: 5px; white-space: nowrap; }
.tabs .on { background: #fbfaf6; color: #2c3038; border-bottom: 1px solid #41465a; }
.freeze { display: flex; align-items: center; gap: 3px; height: 9px; font-size: 5px; white-space: nowrap; }
.switch { appearance: none; position: relative; width: 17px; height: 6px; border-radius: 3px; background: linear-gradient(90deg, transparent 3px, #77777a 3px); }
.switch::before { content: ""; position: absolute; left: 0; top: -1px; width: 8px; height: 8px; border-radius: 50%; background: #fbfaf8; box-shadow: 0 0 1px #777; }
.reset { display: flex; align-items: center; gap: 6px; height: 11px; margin: 1px 0 4px; }
.reset button { height: 11px; gap: 3px; padding: 0 4px; border: 1px solid #efece8; border-radius: 2px; color: #bdbbb7; font-size: 5px; }
.reset button svg { width: 5px; height: 5px; }
.reset .info { width: 5px; height: 5px; }
h4 { height: 7px; font-size: 5px; line-height: 6px; font-weight: 700; text-transform: uppercase; border-bottom: 1px solid #ebe8e3; margin-bottom: 3px; color: #43464c; }
.circuits section + section { margin-top: 6px; }
.circuits section.apart { margin-top: 9px; border-top: 1px solid #dcdad5; padding-top: 4px; }
.circuit { display: flex; align-items: flex-start; height: 20px; padding: 2px 2px 0 4px; border: 1px solid #e6e3dd; border-radius: 2px; margin-bottom: 3px; }
.lead { width: 6px; height: 6px; margin: 1px 4px 0 0; }
.copy { display: flex; flex-direction: column; flex: 1; white-space: nowrap; }
.copy b { font-size: 6px; line-height: 7px; font-weight: 500; color: #2f3238; }
.copy span { display: flex; align-items: center; gap: 3px; font-size: 5px; line-height: 7px; color: #55585e; }
.copy span svg { width: 4px; height: 4px; }
.pill { appearance: none; width: 12px; height: 8px; border-radius: 4px; background: #e6e3df; }
.sortrow { display: flex; align-items: center; justify-content: space-between; height: 11px; margin-bottom: 3px; }
.sortrow label { display: flex; align-items: center; gap: 2px; }
.sortrow svg { width: 5px; height: 5px; }
.sortrow button { width: 13px; height: 11px; border: 1px solid #e6e3dd; border-radius: 2px; }
.center { border: 1px solid #e6e3dd; border-radius: 2px; padding: 2px 4px 4px; margin-bottom: 4px; }
.center header { display: flex; justify-content: space-between; align-items: center; height: 13px; }
.center header b { font-size: 6px; font-weight: 700; color: #1d2026; }
.center header span { font-size: 5px; line-height: 7px; padding: 0 3px; border-radius: 4px; }
.soft { background: #f5f3ef; }
.tan { background: #d2b27c; }
.lemon { background: #f1e676; }
.peach { background: #ecc88f; }
.chips { display: grid; grid-template-columns: repeat(3, 1fr); gap: 2px 3px; }
.chips button { justify-content: space-between; height: 15px; padding: 0 3px; border: 1px solid #e6e3dd; border-radius: 2px; font-size: 6px; }
.chips .on { background: #f1f0ee; border-color: #85878e; border-left-color: #41465a; }
.chips i { width: 13px; height: 9px; border-radius: 4px; background: #e6e3df; }
.chips .r { background: #c7280f; }
.chips .k { background: #12172a; }
.chips .kr { background: linear-gradient(90deg, #12172a 50%, #c7280f 50%); }
.rail { position: absolute; right: 0; top: 0; width: 2px; height: 100%; }
.rail i { display: block; width: 2px; height: 58%; border-radius: 1px; background: #c1c1b6; }
</style>
